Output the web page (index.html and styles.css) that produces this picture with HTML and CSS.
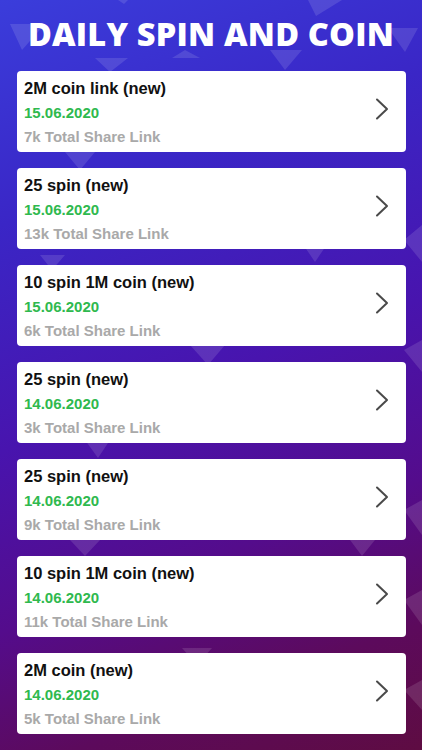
FILE: index.html
```html
<!DOCTYPE html>
<html>
<head>
<meta charset="utf-8">
<link rel="stylesheet" href="styles.css">
</head>
<body>
<svg class="bg-shapes" width="422" height="750" viewBox="0 0 422 750" aria-hidden="true">
  <g fill="#ffffff" fill-opacity="0.12">
    <polygon points="10,24 45,24 22,50"/>
    <polygon points="308,0 342,0 316,16"/>
    <polygon points="118,0 128,0 124,4"/>
    <polygon points="95,58 128,58 110,72"/>
    <polygon points="172,58 200,58 185,50"/>
    <polygon points="270,50 302,50 285,70"/>
    <polygon points="388,28 418,28 405,52"/>
    <polygon points="65,152 95,152 80,170"/>
    <polygon points="300,240 330,240 315,262"/>
    <polygon points="40,255 65,255 52,270"/>
    <polygon points="404,240 422,225 422,262"/>
    <polygon points="190,345 225,345 208,365"/>
    <polygon points="404,350 422,340 422,372"/>
    <polygon points="85,440 110,440 98,458"/>
    <polygon points="404,510 422,500 422,535"/>
    <polygon points="70,540 100,540 85,556"/>
    <polygon points="350,540 375,540 362,556"/>
    <polygon points="182,648 212,648 197,665"/>
    <polygon points="404,600 422,590 422,625"/>
    <polygon points="404,690 422,680 422,710"/>
  </g>
</svg>
<div class="screen">
  <h1 class="title">DAILY SPIN AND COIN</h1>
  <div class="list">
    <div class="card">
      <div class="info">
        <div class="name">2M coin link (new)</div>
        <div class="date">15.06.2020</div>
        <div class="shares">7k Total Share Link</div>
      </div>
      <svg class="chev" width="14" height="22" viewBox="0 0 14 22"><polyline points="2,1.5 12,11 2,20.5"/></svg>
    </div>
    <div class="card">
      <div class="info">
        <div class="name">25 spin (new)</div>
        <div class="date">15.06.2020</div>
        <div class="shares">13k Total Share Link</div>
      </div>
      <svg class="chev" width="14" height="22" viewBox="0 0 14 22"><polyline points="2,1.5 12,11 2,20.5"/></svg>
    </div>
    <div class="card">
      <div class="info">
        <div class="name">10 spin 1M coin (new)</div>
        <div class="date">15.06.2020</div>
        <div class="shares">6k Total Share Link</div>
      </div>
      <svg class="chev" width="14" height="22" viewBox="0 0 14 22"><polyline points="2,1.5 12,11 2,20.5"/></svg>
    </div>
    <div class="card">
      <div class="info">
        <div class="name">25 spin (new)</div>
        <div class="date">14.06.2020</div>
        <div class="shares">3k Total Share Link</div>
      </div>
      <svg class="chev" width="14" height="22" viewBox="0 0 14 22"><polyline points="2,1.5 12,11 2,20.5"/></svg>
    </div>
    <div class="card">
      <div class="info">
        <div class="name">25 spin (new)</div>
        <div class="date">14.06.2020</div>
        <div class="shares">9k Total Share Link</div>
      </div>
      <svg class="chev" width="14" height="22" viewBox="0 0 14 22"><polyline points="2,1.5 12,11 2,20.5"/></svg>
    </div>
    <div class="card">
      <div class="info">
        <div class="name">10 spin 1M coin (new)</div>
        <div class="date">14.06.2020</div>
        <div class="shares">11k Total Share Link</div>
      </div>
      <svg class="chev" width="14" height="22" viewBox="0 0 14 22"><polyline points="2,1.5 12,11 2,20.5"/></svg>
    </div>
    <div class="card">
      <div class="info">
        <div class="name">2M coin (new)</div>
        <div class="date">14.06.2020</div>
        <div class="shares">5k Total Share Link</div>
      </div>
      <svg class="chev" width="14" height="22" viewBox="0 0 14 22"><polyline points="2,1.5 12,11 2,20.5"/></svg>
    </div>
  </div>
</div>
</body>
</html>
```
FILE: styles.css
```css
html, body {
  margin: 0;
  padding: 0;
  height: 750px;
  overflow: hidden;
}
body {
  background: linear-gradient(160deg, #3a3ddb 0%, #3a26c6 25%, #4814ae 50%, #540c8c 70%, #5c0a5c 86%, #5e0c42 100%);
  font-family: "Liberation Sans", Arial, sans-serif;
  position: relative;
}
.bg-shapes {
  position: absolute;
  left: 0;
  top: 0;
  z-index: 0;
}
.screen {
  position: relative;
  z-index: 1;
  display: flex;
  flex-direction: column;
}
.title {
  margin: 0;
  height: 71px;
  padding-top: 12px;
  box-sizing: border-box;
  text-align: center;
  font-family: "Open Sans", sans-serif;
  font-weight: 800;
  font-size: 32.5px;
  line-height: 44px;
  color: #ffffff;
  letter-spacing: 0.2px;
}
.list {
  display: flex;
  flex-direction: column;
  gap: 16px;
  padding: 0 16px 0 17px;
}
.card {
  height: 81px;
  background: #ffffff;
  border-radius: 4px;
  display: flex;
  align-items: center;
  justify-content: space-between;
  padding: 0 17px 0 7px;
  box-sizing: border-box;
}
.info {
  display: flex;
  flex-direction: column;
  padding-top: 5px;
  padding-bottom: 4px;
  align-self: stretch;
  box-sizing: border-box;
}
.name, .date, .shares {
  font-weight: 700;
  line-height: 24.5px;
  white-space: nowrap;
}
.name {
  font-size: 16.5px;
  color: #111111;
}
.date {
  font-size: 15px;
  color: #2fb94e;
}
.shares {
  font-size: 15px;
  color: #a9a9a9;
}
.chev {
  margin-top: -6px;
  fill: none;
  stroke: #4a4a4a;
  stroke-width: 2;
  stroke-linecap: round;
  stroke-linejoin: round;
}
```
